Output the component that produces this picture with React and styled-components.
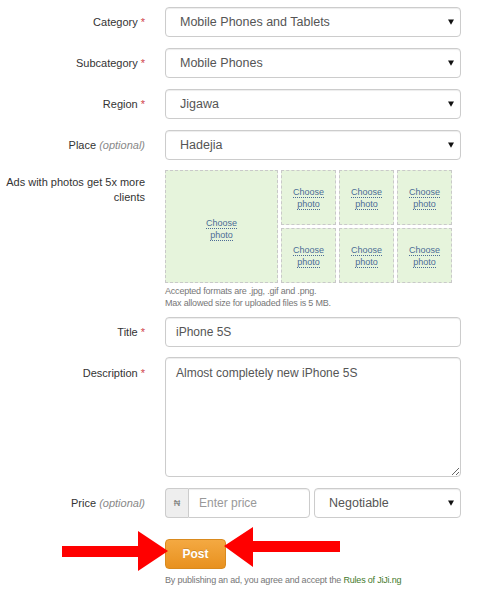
import React from 'react';
import styled, { createGlobalStyle } from 'styled-components';

const Global = createGlobalStyle`
  body {
    margin: 0;
    background: #fff;
    font-family: "Liberation Sans", Arial, sans-serif;
  }
`;

const Page = styled.div`
  position: relative;
  width: 488px;
  height: 605px;
  overflow: hidden;
`;

const Form = styled.form`
  width: 461px;
  padding-top: 7px;
`;

const Row = styled.div`
  display: grid;
  grid-template-columns: 145px 296px;
  column-gap: 20px;
  margin-bottom: ${p => p.$gap || 11}px;
`;

const Label = styled.label`
  text-align: right;
  font-size: 11px;
  color: #333;
  line-height: ${p => (p.$multi ? '15px' : '30px')};
  padding-top: ${p => p.$pad || 0}px;
`;

const Req = styled.span`
  color: #d0454a;
  margin-left: 3px;
`;

const Opt = styled.span`
  color: #888;
  font-style: italic;
`;

const SelectWrap = styled.div`
  position: relative;
  width: ${p => p.$w || '296px'};
  height: 30px;
`;

const Select = styled.select`
  appearance: none;
  -webkit-appearance: none;
  width: 100%;
  height: 30px;
  box-sizing: border-box;
  border: 1px solid #ccc;
  border-radius: 4px;
  background: #fff;
  box-shadow: inset 0 1px 1px rgba(0, 0, 0, 0.075);
  padding: 0 24px 0 14px;
  font-family: "Liberation Sans", Arial, sans-serif;
  font-size: 12.5px;
  color: #555;
  outline: none;
`;

const Caret = styled.svg`
  position: absolute;
  right: 7px;
  top: 12px;
  width: 6px;
  height: 6px;
  pointer-events: none;
`;

const Input = styled.input`
  width: ${p => p.$w || '296px'};
  height: 30px;
  box-sizing: border-box;
  border: 1px solid #ccc;
  border-radius: ${p => p.$radius || '4px'};
  box-shadow: inset 0 1px 1px rgba(0, 0, 0, 0.075);
  padding: 0 10px;
  font-family: "Liberation Sans", Arial, sans-serif;
  font-size: 12px;
  color: #555;
  outline: none;
  &::placeholder {
    color: #999;
  }
`;

const TextArea = styled.textarea`
  display: block;
  width: 296px;
  height: 120px;
  box-sizing: border-box;
  border: 1px solid #ccc;
  border-radius: 4px;
  box-shadow: inset 0 1px 1px rgba(0, 0, 0, 0.075);
  padding: 7px 10px;
  font-family: "Liberation Sans", Arial, sans-serif;
  font-size: 12px;
  line-height: 16px;
  color: #555;
  resize: vertical;
  outline: none;
`;

const PhotoGrid = styled.div`
  display: grid;
  grid-template-columns: 113px 55px 55px 55px;
  grid-template-rows: 55px 55px;
  gap: 3px;
`;

const PhotoCell = styled.div`
  grid-row: ${p => (p.$big ? 'span 2' : 'auto')};
  box-sizing: border-box;
  border: 1px dashed #c9c9c9;
  background: #e6f4dc;
  display: flex;
  align-items: center;
  justify-content: center;
  padding-top: ${p => (p.$big ? 5 : 0)}px;
`;

const Choose = styled.a`
  text-align: center;
  font-size: 9px;
  line-height: 12px;
  color: #4d6c96;
  cursor: pointer;
  span {
    border-bottom: 1px dotted #4d6c96;
  }
`;

const Help = styled.div`
  margin-top: 2px;
  font-size: 9px;
  letter-spacing: -0.2px;
  line-height: 12px;
  color: #777;
`;

const PriceGroup = styled.div`
  display: flex;
  gap: 4px;
`;

const Addon = styled.div`
  display: flex;
`;

const Prefix = styled.span`
  width: 23px;
  height: 30px;
  box-sizing: border-box;
  border: 1px solid #ccc;
  border-right: 0;
  border-radius: 4px 0 0 4px;
  background: #eee;
  color: #777;
  font-size: 9px;
  display: flex;
  align-items: center;
  justify-content: center;
`;

const Submit = styled.div`
  grid-column: 2;
`;

const PostButton = styled.button`
  width: 61px;
  height: 30px;
  border: 1px solid #d98a1e;
  border-radius: 4px;
  background: linear-gradient(#f4a942, #e8911f);
  color: #fff;
  font-family: "Liberation Sans", Arial, sans-serif;
  font-weight: bold;
  font-size: 12px;
  text-shadow: 0 -1px 0 rgba(0, 0, 0, 0.15);
  cursor: pointer;
`;

const Terms = styled.p`
  margin: 6px 0 0;
  font-size: 9px;
  letter-spacing: -0.2px;
  color: #777;
  a {
    color: #3f7a2c;
    text-decoration: none;
  }
`;

const Arrows = styled.svg`
  position: absolute;
  left: 0;
  top: 0;
  pointer-events: none;
`;

function Dropdown({ value, width }) {
  return (
    <SelectWrap $w={width}>
      <Select defaultValue={value}>
        <option>{value}</option>
      </Select>
      <Caret viewBox="0 0 6 6">
        <path d="M0 0.5 H6 L3 5.8 Z" fill="#111" />
      </Caret>
    </SelectWrap>
  );
}

function Photo({ big }) {
  return (
    <PhotoCell $big={big}>
      <Choose>
        <span>Choose</span>
        <br />
        <span>photo</span>
      </Choose>
    </PhotoCell>
  );
}

export default function App() {
  return (
    <Page>
      <Global />
      <Form onSubmit={e => e.preventDefault()}>
        <Row>
          <Label>Category<Req>*</Req></Label>
          <Dropdown value="Mobile Phones and Tablets" />
        </Row>
        <Row>
          <Label>Subcategory<Req>*</Req></Label>
          <Dropdown value="Mobile Phones" />
        </Row>
        <Row>
          <Label>Region<Req>*</Req></Label>
          <Dropdown value="Jigawa" />
        </Row>
        <Row $gap={10}>
          <Label>Place <Opt>(optional)</Opt></Label>
          <Dropdown value="Hadejia" />
        </Row>
        <Row $gap={8}>
          <Label $multi $pad={5}>Ads with photos get 5x more clients</Label>
          <div>
            <PhotoGrid>
              <Photo big />
              <Photo />
              <Photo />
              <Photo />
              <Photo />
              <Photo />
              <Photo />
            </PhotoGrid>
            <Help>
              Accepted formats are .jpg, .gif and .png.
              <br />
              Max allowed size for uploaded files is 5 MB.
            </Help>
          </div>
        </Row>
        <Row $gap={10}>
          <Label>Title<Req>*</Req></Label>
          <Input defaultValue="iPhone 5S" />
        </Row>
        <Row>
          <Label $multi $pad={9}>Description<Req>*</Req></Label>
          <TextArea defaultValue="Almost completely new iPhone 5S" />
        </Row>
        <Row $gap={21}>
          <Label>Price <Opt>(optional)</Opt></Label>
          <PriceGroup>
            <Addon>
              <Prefix>₦</Prefix>
              <Input $w="122px" $radius="0 4px 4px 0" placeholder="Enter price" />
            </Addon>
            <Dropdown value="Negotiable" width="147px" />
          </PriceGroup>
        </Row>
        <Row>
          <Submit>
            <PostButton type="submit">Post</PostButton>
            <Terms>
              By publishing an ad, you agree and accept the <a href="#rules">Rules of JiJi.ng</a>
            </Terms>
          </Submit>
        </Row>
      </Form>
      <Arrows width="488" height="605" viewBox="0 0 488 605">
        <polygon points="62,546 138,546 138,531 168,551 138,571 138,557 62,557" fill="#f00" />
        <polygon points="340,541 253,541 253,527 224,546 253,567 253,552 340,552" fill="#f00" />
      </Arrows>
    </Page>
  );
}
